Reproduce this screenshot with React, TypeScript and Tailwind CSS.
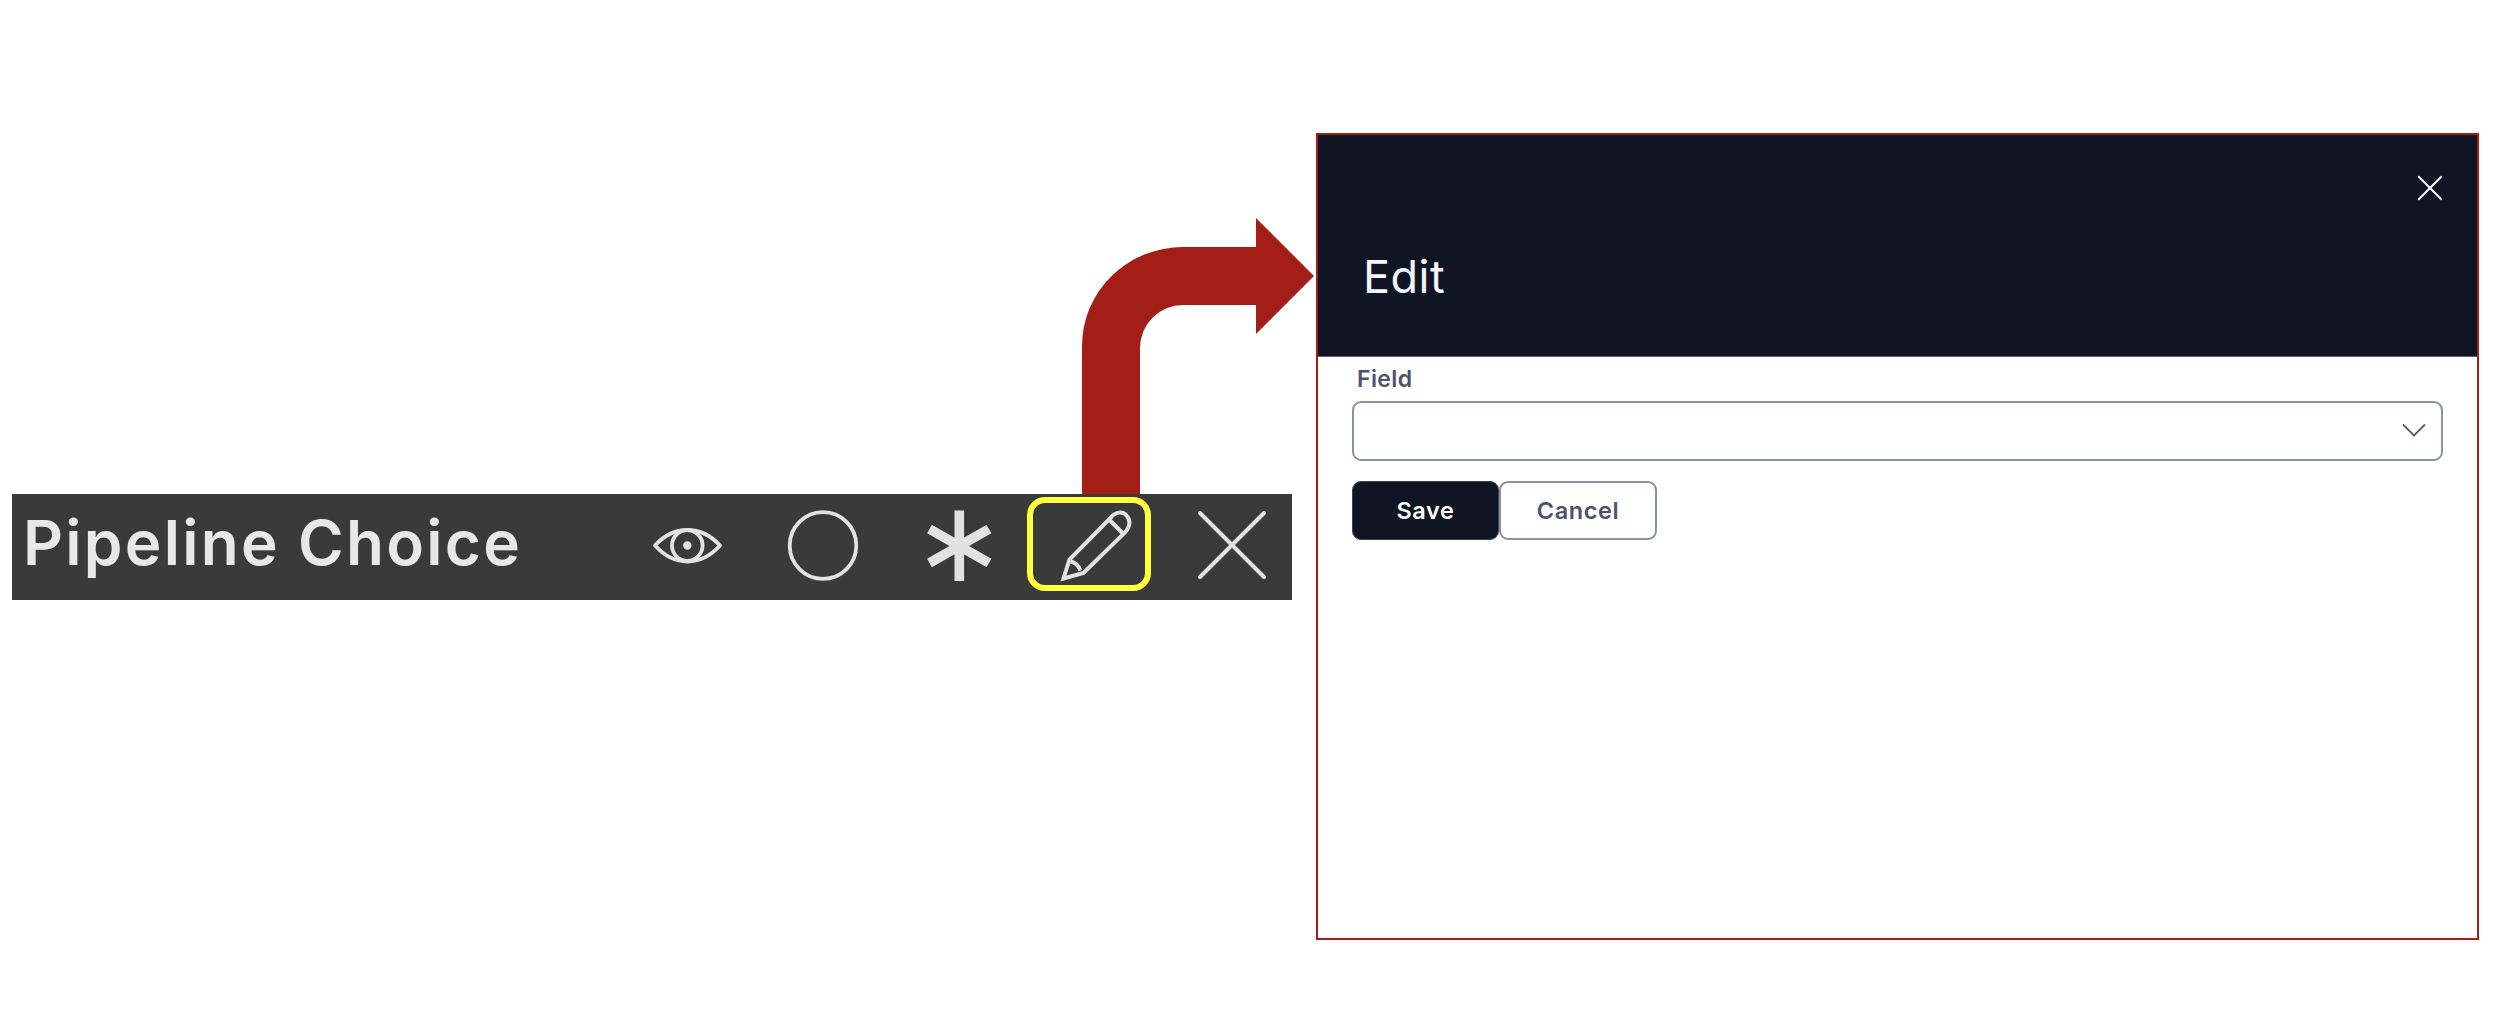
import React from "react";

function EyeIcon() {
  return (
    <svg className="h-[74px] w-[74px]" viewBox="651 507.500 74 74" fill="none" stroke="currentColor" strokeWidth="3.8" strokeLinejoin="round">
      <path d="M655 545C665 534 676 529.5 687.3 529.5C699 529.5 710 534 720 545C710 556 699 561 687.3 561C676 561 665 556 655 545Z" />
      <circle cx="687.3" cy="545" r="15.3" />
      <circle cx="687.3" cy="545" r="4.2" fill="currentColor" stroke="none" />
    </svg>
  );
}

function CircleIcon() {
  return (
    <svg className="h-[74px] w-[74px]" viewBox="787 507.500 74 74" fill="none" stroke="currentColor" strokeWidth="3.8">
      <circle cx="823" cy="545" r="33.3" />
    </svg>
  );
}

function AsteriskIcon() {
  return (
    <svg className="h-[74px] w-[74px]" viewBox="923 507.500 74 74" fill="none" stroke="currentColor" strokeWidth="9.6">
      <path d="M959.3 510V580.5M929.5 528.5L989 562.5M989 528.5L929.5 562.5" />
    </svg>
  );
}

function PencilIcon() {
  return (
    <svg className="h-[74px] w-[74px]" viewBox="1059 507.500 74 74" fill="none" stroke="currentColor" strokeWidth="4">
      <path d="M1063.5 578L1069.5 559L1110.5 517.5C1115 511 1123 510.5 1126.500 515C1131 520 1130 526 1125 532L1083.500 572.500Z" />
      <path d="M1109 519L1123 533M1070.500 561Q1077 562 1080.500 570" />
    </svg>
  );
}

function CloseIcon({ className, strokeWidth }: { className: string; strokeWidth: number }) {
  return (
    <svg className={className} viewBox="0 0 74 74" fill="none" stroke="currentColor" strokeWidth={strokeWidth} strokeLinecap="round">
      <path d="M5 5L69 69M69 5L5 69" />
    </svg>
  );
}

export default function App() {
  return (
    <div className="relative flex h-[1016px] w-[2496px] items-start overflow-hidden bg-white pl-3 font-['Inter',sans-serif]">
      <div className="mt-[494px] flex h-[106px] w-[1280px] items-center bg-[#3a3a3a] pr-[23px] text-[#e2e2e2]">
        <h1 className="mb-[9px] ml-[11px] text-[62px] leading-none font-semibold tracking-[2.3px] whitespace-nowrap text-[#e8e8e8]">Pipeline Choice</h1>
        <div className="mb-[4px] ml-auto flex gap-[62px]">
          <EyeIcon />
          <CircleIcon />
          <AsteriskIcon />
          <PencilIcon />
          <CloseIcon className="h-[74px] w-[74px]" strokeWidth={4} />
        </div>
      </div>

      <section className="mt-[133px] ml-6 h-[807px] w-[1163px] border-2 border-[#a31e16]">
        <header className="relative h-[222px] border-b border-[#5b6072] bg-[#0f1522] pt-[109px] pl-[45px]">
          <h2 className="text-[45px] leading-[66px] tracking-[0.5px] text-[#f4f4fb]">Edit</h2>
          <CloseIcon className="absolute top-[40px] right-[34px] h-[26px] w-[26px] text-white" strokeWidth={5.5} />
        </header>
        <form className="flex flex-col px-[34px] text-[23px] font-semibold text-[#4b546e]">
          <label className="mt-[8px] ml-[5px] h-[36px] leading-[29px] tracking-[0.4px]">Field</label>
          <div className="flex h-[60px] items-center justify-end rounded-[9px] border-2 border-[#8b90a3] pr-[15px] pb-[2px]">
            <svg className="h-[14px] w-[24px]" viewBox="0 0 24 14" fill="none" stroke="#545b75" strokeWidth="1.8">
              <path d="M1 1.500L12 12.500L23 1.500" />
            </svg>
          </div>
          <div className="mt-5 flex">
            <button type="button" className="h-[59px] w-[147px] rounded-[9px] border border-[#3c4253] bg-[#0f1522] text-[23.5px] tracking-[0.6px] text-white">Save</button>
            <button type="button" className="h-[59px] w-[158px] rounded-[9px] border-2 border-[#8b90a3] text-[23.5px] tracking-[0.6px]">Cancel</button>
          </div>
        </form>
      </section>

      <svg className="absolute top-[218px] left-[1082px] h-[276px] w-[233px]" viewBox="1082 218 233 276" fill="#a31e16">
        <path d="M1082 494V346A101 99 0 0 1 1183 247H1256V218L1314 276L1256 334V305H1183A43 43 0 0 0 1140 348V494Z" />
      </svg>
      <div className="absolute top-[497px] left-[1027px] h-[94px] w-[124px] rounded-[18px] border-[6px] border-[#ffff3c]" />
    </div>
  );
}
